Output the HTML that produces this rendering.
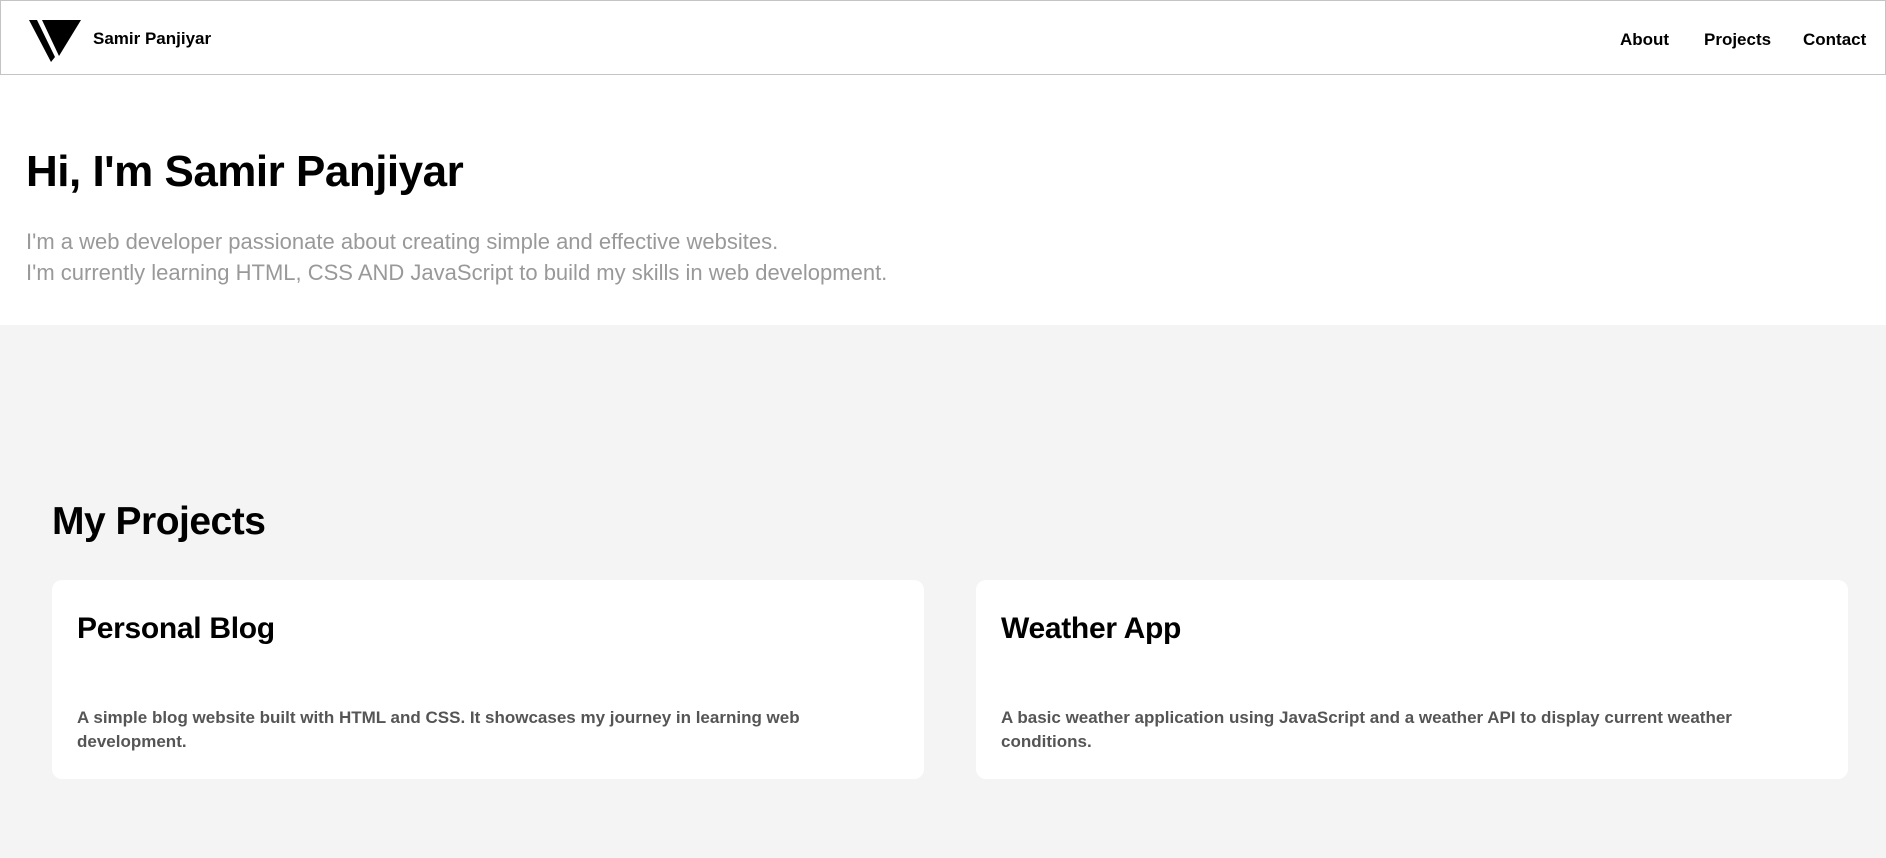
<!DOCTYPE html>
<html><head><meta charset="utf-8"><style>
*{margin:0;padding:0;box-sizing:border-box}
body{width:1886px;height:858px;overflow:hidden;background:#f4f4f4;font-family:"Liberation Sans",sans-serif;color:#000}
header{position:absolute;left:0;top:0;width:1886px;height:75px;background:#fff;border:1px solid #c4c4c4}
.logo{position:absolute;left:28px;top:19px}
.brand{position:absolute;left:92px;top:28px;font-weight:bold;font-size:17px}
nav a{position:absolute;top:29px;font-weight:bold;font-size:17px;color:#000;text-decoration:none}
.hero{position:absolute;left:0;top:75px;width:1886px;height:250px;background:#fff}
h1{position:absolute;left:26px;top:147px;font-size:44px;font-weight:bold;letter-spacing:-0.5px}
.p{position:absolute;left:26px;top:226px;font-size:22px;line-height:31px;color:#999}
h2{position:absolute;left:52px;top:500px;font-size:39px;font-weight:bold;letter-spacing:-0.5px}
.card{position:absolute;top:580px;width:872px;height:199px;background:#fff;border-radius:10px}
.card h3{position:absolute;left:25px;top:32px;font-size:30px;font-weight:bold;letter-spacing:-0.3px}
.card p{position:absolute;left:25px;top:126px;width:790px;font-size:17px;line-height:24px;font-weight:bold;color:#555}
</style></head><body>
<header>
<svg class="logo" width="52" height="42" viewBox="0 0 52 42"><polygon points="0,0 8,0 26,37 22,42" fill="#000"/><polygon points="13,0 52,0 30,36" fill="#000"/></svg>
<div class="brand">Samir Panjiyar</div>
<nav><a style="left:1619px">About</a><a style="left:1703px">Projects</a><a style="left:1802px">Contact</a></nav>
</header>
<div class="hero"></div>
<h1>Hi, I'm Samir Panjiyar</h1>
<div class="p">I'm a web developer passionate about creating simple and effective websites.<br>I'm currently learning HTML, CSS AND JavaScript to build my skills in web development.</div>
<h2>My Projects</h2>
<div class="card" style="left:52px"><h3>Personal Blog</h3><p>A simple blog website built with HTML and CSS. It showcases my journey in learning web development.</p></div>
<div class="card" style="left:976px"><h3>Weather App</h3><p>A basic weather application using JavaScript and a weather API to display current weather conditions.</p></div>
</body></html>
